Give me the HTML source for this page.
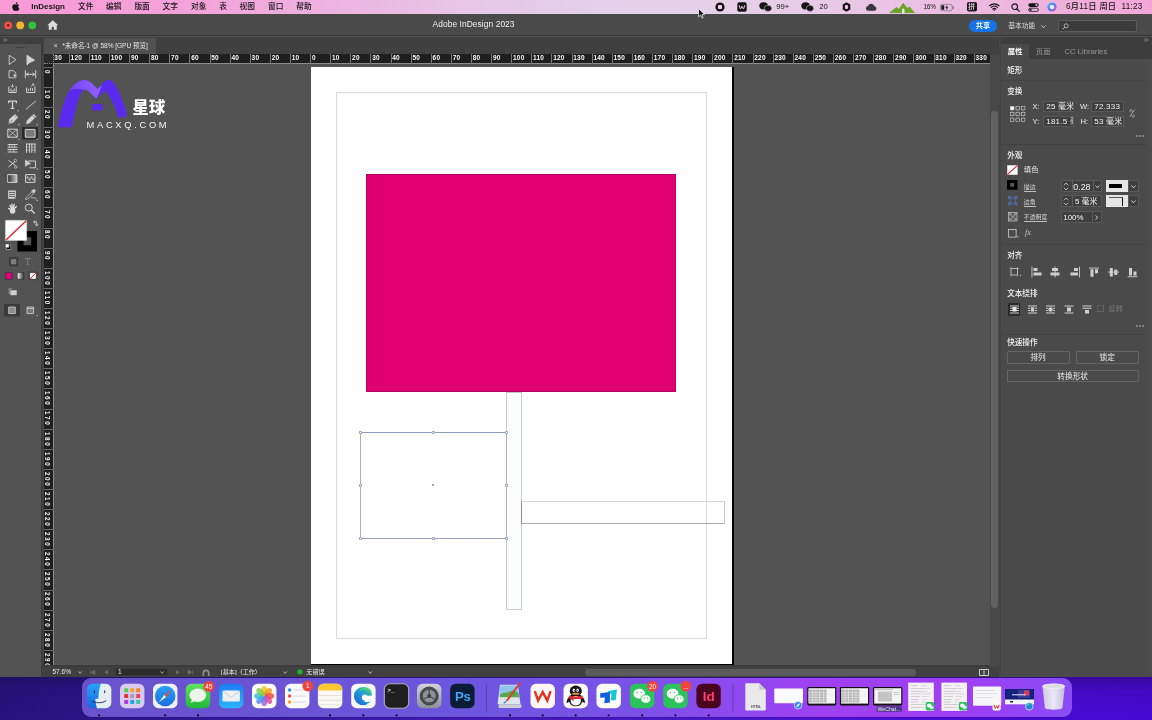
<!DOCTYPE html>
<html lang="zh-CN">
<head>
<meta charset="utf-8">
<title>Adobe InDesign 2023</title>
<style>
*{box-sizing:border-box;margin:0;padding:0}
html,body{width:1152px;height:720px;overflow:hidden}
body{position:relative;font-family:"Liberation Sans","Noto Sans CJK SC",sans-serif;font-size:7.5px;color:#e6e6e6;
 background:linear-gradient(180deg,rgba(20,10,60,.35) 0,rgba(20,10,60,.35) 94%,rgba(20,10,60,.1) 96%,rgba(20,10,60,0) 100%),linear-gradient(90deg,#26137c 0%,#2b1588 8%,#3a1aa8 30%,#4a18c8 60%,#4a0ed8 80%,#4609d2 100%)}
.abs{position:absolute}
svg{position:absolute;overflow:visible}
#menubar{z-index:5;will-change:transform;position:absolute;left:0;top:0;width:1152px;height:14px;
 background:linear-gradient(90deg,#f79ad6 0%,#f4a2da 16%,#eeb2e0 28%,#e7c6e7 40%,#e3d0ea 52%,#e5d1ea 61%,#e8c9e7 73%,#ecbce2 83%,#f0b0dc 92%,#f3a7d9 100%)}
#menubar span{position:absolute;top:0;height:14px;line-height:14.1px;color:#151515;font-size:7.7px;font-weight:500;white-space:nowrap}
#win{position:absolute;left:0;top:0;width:1152px;height:677px;background:#535353;will-change:transform}
#titlebar{position:absolute;left:0;top:14px;width:1152px;height:22px;background:#4a4a4a;border-bottom:1px solid #383838}
#tabstrip{position:absolute;left:0;top:36.5px;width:1152px;height:17.5px;background:#404040}
#doctab{position:absolute;left:44px;top:37.5px;width:112px;height:16.5px;background:#515151}
</style>
</head>
<body>
<div id="menubar">
<svg style="left:11.9px;top:1.8px" width="7.5" height="8.9" viewBox="0 0 16 19"><path fill="#141414" d="M13.2 10c0-2.300 1.900-3.400 2-3.500-1.100-1.600-2.800-1.800-3.400-1.800-1.400-.1-2.800.9-3.500.9s-1.900-.9-3.100-.8c-1.600 0-3.100.9-3.900 2.400-1.700 2.900-.4 7.200 1.200 9.500.800 1.100 1.700 2.400 3 2.400 1.200 0 1.700-.8 3.100-.8s1.900.8 3.100.8c1.300 0 2.100-1.200 2.900-2.300.900-1.300 1.300-2.600 1.300-2.700 0 0-2.500-1-2.500-3.900zM10.800 3.100c.700-.8 1.100-1.900 1-3.100-1 0-2.100.7-2.800 1.500-.6.700-1.200 1.900-1 3 1.100.1 2.200-.6 2.800-1.400z"/></svg>
<span style="left:31.2px;font-weight:bold;font-size:8px">InDesign</span>
<span style="left:78px">文件</span>
<span style="left:106px">编辑</span>
<span style="left:134.4px">版面</span>
<span style="left:162.5px">文字</span>
<span style="left:191px">对象</span>
<span style="left:219.3px">表</span>
<span style="left:239.6px">视图</span>
<span style="left:268px">窗口</span>
<span style="left:296.2px">帮助</span>
<!-- right status icons -->
<svg style="left:714.5px;top:2px" width="10" height="10" viewBox="0 0 10 10"><circle cx="5" cy="5" r="4.6" fill="#161616"/><rect x="3" y="3" width="4" height="4" rx="0.8" fill="#f0d4ea"/></svg>
<svg style="left:737px;top:2px" width="10" height="10" viewBox="0 0 10 10"><rect x="0.3" y="0.3" width="9.400" height="9.400" rx="1.800" fill="#161616"/><path d="M2 3.200 3.500 7 5 4.200 6.500 7 8 3.200" fill="none" stroke="#eed0e8" stroke-width="1"/></svg>
<svg style="left:759px;top:2px" width="13" height="10" viewBox="0 0 13 10"><ellipse cx="4.600" cy="3.800" rx="4.300" ry="3.600" fill="#161616"/><ellipse cx="9" cy="6.300" rx="3.700" ry="3.100" fill="#161616" stroke="#e8c8e4" stroke-width=".5"/></svg>
<span style="left:776.3px;font-size:7.7px">99+</span>
<svg style="left:801px;top:2px" width="13" height="10" viewBox="0 0 13 10"><ellipse cx="4.600" cy="3.800" rx="4.300" ry="3.600" fill="#161616"/><ellipse cx="9" cy="6.300" rx="3.700" ry="3.100" fill="#161616" stroke="#e8c8e4" stroke-width=".5"/></svg>
<span style="left:819.3px;font-size:7.7px">20</span>
<svg style="left:842px;top:2px" width="9" height="10" viewBox="0 0 9 10"><path d="M4.500.3 8.300 2.500v5L4.500 9.700.7 7.500v-5z" fill="#161616"/><ellipse cx="4.500" cy="5" rx="1.700" ry="2.300" fill="#ecc4e2"/></svg>
<svg style="left:865.3px;top:3.800px" width="13.400" height="7" viewBox="0 0 15 9"><path d="M3.200 8.600a3 3 0 0 1-.3-6A4.200 4.200 0 0 1 11 2.900a3 3 0 0 1 .8 5.700z" fill="#3a3440"/></svg>
<svg style="left:888.5px;top:1.500px" width="26" height="11" viewBox="0 0 26 11"><path d="M0 11 7.500 5l2.500 2L14 .8 18.500 6l2-1.500L26 11z" fill="#6aa326"/><path d="M13 11V7.500l1.200-1.300 1.300 1.300V11z" fill="#e9efe0"/></svg>
<span style="left:923.5px;font-size:6.400px;letter-spacing:-.2px">16%</span>
<svg style="left:939.8px;top:3.700px" width="14.400" height="7.200" viewBox="0 0 16 8"><rect x=".4" y=".4" width="13.200" height="7.200" rx="2" fill="none" stroke="#77707a" stroke-width=".8"/><rect x="14.200" y="2.600" width="1.200" height="2.800" rx=".5" fill="#77707a"/><rect x="1.500" y="1.500" width="3.200" height="5" rx="1" fill="#161616"/><path d="M8.300.9 5.800 4.300h1.700L6.700 7.200l2.700-3.600H7.700z" fill="#161616"/></svg>
<svg style="left:966.500px;top:2.300px" width="10" height="9.500" viewBox="0 0 10 9.500"><rect width="10" height="9.500" rx="1.800" fill="#1b1b1b"/></svg>
<span style="left:968px;font-size:7px;color:#f0cfe6;line-height:13.800px">拼</span>
<svg style="left:989.2px;top:3.300px" width="10.600" height="8" viewBox="0 0 12 9"><path d="M.7 3.100a7.600 7.600 0 0 1 10.600 0M2.500 5a5 5 0 0 1 7 0M4.300 6.800a2.500 2.500 0 0 1 3.400 0" fill="none" stroke="#161616" stroke-width="1.300" stroke-linecap="round"/><circle cx="6" cy="8.100" r=".8" fill="#161616"/></svg>
<svg style="left:1010.5px;top:2.500px" width="9" height="9" viewBox="0 0 9 9"><circle cx="3.700" cy="3.700" r="2.800" fill="none" stroke="#161616" stroke-width="1.100"/><path d="M5.800 5.800 8.400 8.400" stroke="#161616" stroke-width="1.200" stroke-linecap="round"/></svg>
<svg style="left:1027.5px;top:2.800px" width="11" height="9" viewBox="0 0 11 9"><rect x=".3" y=".3" width="10.400" height="3.600" rx="1.800" fill="#161616"/><rect x=".6" y="5.200" width="9.800" height="3.200" rx="1.600" fill="none" stroke="#161616" stroke-width=".8"/><circle cx="8.400" cy="2.100" r="1.100" fill="#ecc0e0"/><circle cx="2.600" cy="6.800" r="1.100" fill="#161616"/></svg>
<svg style="left:1046.5px;top:2.200px" width="10" height="10" viewBox="0 0 10 10"><defs><linearGradient id="siri" x1="0" y1="0" x2="1" y2="1"><stop offset="0" stop-color="#3fd0f0"/><stop offset=".5" stop-color="#4a78f0"/><stop offset="1" stop-color="#e055c8"/></linearGradient></defs><circle cx="5" cy="5" r="4.600" fill="url(#siri)"/><circle cx="5" cy="5" r="2.300" fill="#e8ecf8"/></svg>
<span style="left:1066px;font-size:8.200px;letter-spacing:.28px">6月11日 周日&nbsp; 11:23</span>
<svg style="left:697.5px;top:7.500px" width="8" height="11" viewBox="0 0 8 11"><path d="M.6.600v8.200l2-1.800 1.300 3.100 1.300-.5-1.300-3h2.600z" fill="#111" stroke="#fff" stroke-width=".7"/></svg>
</div>
<div id="win">
<div id="titlebar">
<svg style="left:4.300px;top:7.200px" width="34" height="9" viewBox="0 0 34 9"><circle cx="4.200" cy="4.300" r="3.900" fill="#f0544c"/><circle cx="4.200" cy="4.300" r="1.300" fill="#8e0f0a"/><circle cx="16.200" cy="4.300" r="3.900" fill="#f5b52e"/><circle cx="28.300" cy="4.300" r="3.900" fill="#2fc23c"/></svg>
<svg style="left:46.500px;top:6.200px" width="11.500" height="10" viewBox="0 0 23 20"><path d="M11.500.5.500 10.500h3V19.500h6v-6h4v6h6v-9h3z" fill="#dcdcdc"/></svg>
<span class="abs" style="left:432.500px;top:0;height:20px;line-height:20.600px;font-size:8.450px;color:#f0f0f0;white-space:nowrap;letter-spacing:.05px">Adobe InDesign 2023</span>
<div class="abs" style="left:969px;top:6px;width:28px;height:11.500px;border-radius:6px;background:#1473e6;color:#fff;font-weight:bold;font-size:7.200px;line-height:11px;text-align:center">共享</div>
<span class="abs" style="left:1008.200px;top:6px;height:11.500px;line-height:11.500px;font-size:6.800px;color:#dedede;white-space:nowrap">基本功能</span>
<svg style="left:1040.500px;top:10.500px" width="5" height="3.500" viewBox="0 0 5 3.500"><path d="M.5.500 2.500 2.800 4.500.5" fill="none" stroke="#cfcfcf" stroke-width=".9"/></svg>
<div class="abs" style="left:1058px;top:6px;width:79px;height:11.500px;background:#3c3c3c;border:.8px solid #5c5c5c;border-radius:1.500px"></div>
<svg style="left:1061.500px;top:8.500px" width="7" height="7" viewBox="0 0 7 7"><circle cx="4.200" cy="2.800" r="2" fill="none" stroke="#c8c8c8" stroke-width=".8"/><path d="M2.800 4.200.6 6.400" stroke="#c8c8c8" stroke-width=".9"/></svg>
</div>
<div id="tabstrip"></div>
<div id="doctab">
<span class="abs" style="left:9.500px;top:0;line-height:15.500px;font-size:7.500px;color:#d8d8d8">×</span>
<span class="abs" style="left:18.300px;top:0;line-height:16px;font-size:6.600px;color:#e4e4e4;white-space:nowrap;letter-spacing:-.05px">*未命名-1 @ 58% [GPU 预览]</span>
</div>
<div class="abs" style="left:0;top:36.500px;width:42px;height:7.500px;background:#3e3e3e"></div>
<div class="abs" style="left:0;top:44px;width:42px;height:633px;background:#535353;border-right:.8px solid #3a3a3a"></div>
<div class="abs" style="left:42px;top:44px;width:2px;height:633px;background:#424242"></div>
<svg style="left:2.500px;top:38px" width="5" height="4" viewBox="0 0 5 4"><path d="M.4.400 2 2 .4 3.600M2.600.400 4.200 2 2.600 3.600" fill="none" stroke="#bdbdbd" stroke-width=".6"/></svg>
<div class="abs" style="left:15.500px;top:46.800px;width:9px;height:.9px;background:#3a3a3a"></div>
<svg id="tools" style="left:0;top:44px" width="42" height="290" viewBox="0 44 42 290" fill="none" stroke="#d2d2d2" stroke-width=".9" stroke-linejoin="round">
<!-- row1 selection / direct selection -->
<path d="M9.200 55.300v9.200l6.800-4.800z"/>
<path d="M27 55.300v9.600l2.600-2.400 5-2.300z" fill="#d2d2d2"/>
<!-- row2 page tool / gap tool -->
<path d="M9 70.700h4.500l2.300 2.300v4.800H9z"/><path d="M13.500 73.500v4.300l3.600-2.200z" fill="#d2d2d2" stroke="#535353" stroke-width=".4"/>
<path d="M25.300 70.300v8M35.700 70.300v8M26 74.300h9M28.500 72.800 26.500 74.300l2 1.500M32.500 72.800l2 1.500-2 1.500" stroke-width="1"/>
<!-- row3 content collector / placer -->
<path d="M8.800 86.500v6h7.400v-6M10.800 88.500v2.500h3.400v-2.500" stroke-width="1"/><path d="M12.500 84v3M11 85.800l1.500 1.500 1.500-1.500" stroke-width=".8"/>
<path d="M26.500 87.500v5h8.400v-6M28.500 90.800v-2M30.500 90.800v-3M32.500 90.800v-2.500" stroke-width="1"/><path d="M31 86.500 33.800 84M32 84h1.800v1.800" stroke-width=".8"/>
<!-- row4 type / line -->
<path d="M8.600 103.300v-2.100h7.800v2.100M12.500 101.200v7.200M10.700 108.400h3.600" stroke-width="1.300"/>
<path d="M26 109.300 36 100.800" stroke-width=".9"/>
<path d="M18.500 111.200v-1.600l-1.600 1.600z" fill="#d2d2d2" stroke="none"/>
<!-- row5 pen / pencil -->
<path d="M8.800 123.600l.8-4.600 4.200-3.600 3 3.200-3.700 4z" fill="#d2d2d2" stroke-width=".5"/><path d="M8.800 123.600 12.300 120" stroke="#535353" stroke-width=".6"/><path d="M14.500 114.500l3.200 3.400" stroke-width="1.400"/>
<path d="M26.300 123.800l.8-3.300 6.500-6.300 2.400 2.400-6.400 6.400z" fill="#d2d2d2" stroke-width=".5"/><path d="M32.300 115.300l2.500 2.500" stroke="#535353" stroke-width=".7"/>
<path d="M19.500 125.200v-1.600l-1.600 1.600zM37.500 125.200v-1.600l-1.600 1.600z" fill="#d2d2d2" stroke="none"/>
<!-- row6 rect frame / rect (selected) -->
<rect x="22" y="127" width="16" height="12.500" fill="#2b2b2b" stroke="none"/>
<rect x="7.800" y="129.200" width="9.400" height="8" stroke-width="1"/><path d="M7.800 129.200 17.200 137.200M17.200 129.200 7.800 137.200" stroke-width=".7"/>
<rect x="25.300" y="129.400" width="9.800" height="7.800" fill="#7a7a7a" stroke-width="1"/>
<path d="M19.500 140v-1.600l-1.600 1.600zM37.800 139.800v-1.600l-1.600 1.600z" fill="#d2d2d2" stroke="none"/>
<!-- row7 grids -->
<path d="M7.600 144.500h9.800M7.600 147.200h9.800M7.600 149.500h9.800M7.600 152h9.800" stroke-width="1"/><path d="M9.500 144.500v2.700M12 144.500v2.700M14.500 144.500v2.700M10 149.500v2.500M13.500 149.500v2.500" stroke-width=".6"/>
<path d="M26.500 143.800v9M29.600 143.800v9M31.800 143.800v9M35 143.800v9M26 144h9.500" stroke-width="1"/><path d="M26.500 147h3M26.500 150h3M31.800 147h3M31.800 150h3" stroke-width=".6"/>
<!-- row8 scissors / free transform -->
<path d="M8.500 160.500l7 5M8.500 167l6.500-5.500" stroke-width="1"/><circle cx="15.300" cy="160.600" r="1.300" stroke-width=".7"/><circle cx="15.800" cy="167" r="1.300" stroke-width=".7"/>
<path d="M28 161h7.500v6.800h-6" stroke-width="1"/><path d="M25.300 159.800v7l1.800-1.700 3.700-1.400z" fill="#d2d2d2" stroke-width=".4"/>
<path d="M37.800 169.600v-1.600l-1.600 1.600z" fill="#d2d2d2" stroke="none"/>
<!-- row9 gradient / gradient feather -->
<defs><linearGradient id="tg" x1="0" x2="1"><stop offset="0" stop-color="#2a2a2a"/><stop offset="1" stop-color="#c8c8c8"/></linearGradient></defs>
<rect x="7.700" y="174.600" width="9.200" height="7.800" fill="url(#tg)" stroke-width="1"/>
<rect x="25.600" y="174.600" width="9.400" height="7.800" stroke-width="1"/><path d="M26.500 176.500h2v2h-2zM30.500 176.500h2v2h-2zM28.500 178.500h2v2h-2zM32.500 178.500h2v2h-2z" fill="#bdbdbd" stroke="none"/>
<!-- row10 note / eyedropper -->
<path d="M8.200 190.600h7.600v8.200h-7.600z" fill="#dcdcdc" stroke="none"/><path d="M9 192.400h6M9 194.400h6M9 196.400h6" stroke="#4a4a4a" stroke-width=".9"/><path d="M13.600 197.400h2.200v1.400z" fill="#535353" stroke="none"/>
<path d="M25.500 199.500l1-2.500 5.500-5.300 1.600 1.600-5.400 5.400z" stroke-width=".7"/><path d="M31.500 190.800l2.800-1.600 1.300 1.300-1.600 2.800z" fill="#d2d2d2" stroke-width=".5"/><path d="M31 197.800h4.500M36.700 198.300 35.500 199.500" stroke-width=".8"/>
<path d="M37.800 201v-1.600l-1.600 1.600z" fill="#d2d2d2" stroke="none"/>
<!-- row11 hand / zoom -->
<path d="M12.600 210.500 10 205.600M12.600 210.500 11.900 204.200M12.600 210.500 14.200 204.500M12.600 210.500 16.300 206.600M12.600 210.800 8.600 208.400" stroke="#dcdcdc" stroke-width="1.400" stroke-linecap="round"/><ellipse cx="12.600" cy="211" rx="2.700" ry="2.700" fill="#dcdcdc" stroke="none"/>
<circle cx="28.800" cy="207.600" r="3.500" stroke-width="1"/><path d="M31.400 210.200 34.700 213.500" stroke-width="1.500"/>
<!-- fill/stroke -->
<rect x="17.400" y="231" width="19.600" height="20.500" fill="#000" stroke="none"/>
<rect x="23.600" y="237.300" width="7.600" height="8" fill="#535353" stroke="none"/>
<rect x="5.400" y="220.300" width="21.300" height="20.200" fill="#fff" stroke="#d8d8d8" stroke-width=".4"/>
<path d="M6 240 26.300 220.800" stroke="#d8202c" stroke-width="1.300"/>
<path d="M33.800 222h3v3.800M35.300 220.500 33.500 222l1.800 1.500M35.300 224.300l1.500 1.800 1.500-1.800" stroke-width=".9"/>
<rect x="6.600" y="245.300" width="4.200" height="4.200" fill="#000" stroke="#e0e0e0" stroke-width=".5"/><rect x="5.400" y="244" width="3.600" height="3.600" fill="#fff" stroke="#333" stroke-width=".4"/>
<!-- format affects -->
<rect x="9" y="257.200" width="9.200" height="9" fill="#3a3a3a" stroke="none"/>
<rect x="11.300" y="259.500" width="4.600" height="4.500" fill="#7c7c7c" stroke="#9a9a9a" stroke-width=".5"/>
<path d="M25.300 259.500v-1h4.800v1M27.700 258.500v5.700M26.600 264.300h2.200" stroke="#8a8a8a" stroke-width=".8"/>
<!-- apply color row -->
<rect x="5.600" y="272.600" width="6.600" height="6.600" fill="#e6007e" stroke="#2a2a2a" stroke-width=".6"/>
<defs><linearGradient id="tg2" x1="0" x2="1"><stop offset="0" stop-color="#fff"/><stop offset="1" stop-color="#333"/></linearGradient></defs>
<rect x="17.300" y="272.600" width="6.600" height="6.600" fill="url(#tg2)" stroke="#2a2a2a" stroke-width=".6"/>
<rect x="28.400" y="271.600" width="9" height="8.600" fill="#3a3a3a" stroke="none"/>
<rect x="29.700" y="272.600" width="6.600" height="6.600" fill="#fff" stroke="#2a2a2a" stroke-width=".6"/><path d="M30 279 36 272.900" stroke="#d8202c" stroke-width="1"/>
<!-- view options -->
<path d="M10.500 290.500h6v4.500h-6z" fill="#cfcfcf" stroke-width=".4"/><path d="M8.500 289h3M8.500 291h1.500M8.500 293h1.500" stroke-width=".7"/>
<!-- screen mode -->
<rect x="4" y="304" width="16" height="12.500" fill="#3a3a3a" stroke="none"/>
<rect x="8.700" y="307" width="6.600" height="6.600" fill="#8a8a8a" stroke="#cfcfcf" stroke-width=".8"/>
<rect x="27" y="307" width="6.600" height="6.600" fill="#777" stroke="#cfcfcf" stroke-width=".8"/><path d="M27 308.500h6.600" stroke-width=".8"/>
<path d="M37.500 316.300v-1.600l-1.600 1.600z" fill="#d2d2d2" stroke="none"/>
</svg>
<style>
#hruler i{position:absolute;top:0;width:.6px;height:9.6px;background:#787878}
#hruler b{position:absolute;top:0;line-height:8.8px;font-size:6.5px;font-weight:bold;color:#fafafa;white-space:nowrap;letter-spacing:.2px}
#vruler i{position:absolute;left:0;height:.6px;width:9.6px;background:#6c6c6c}
#vruler b{position:absolute;left:-.6px;width:7.4px;font-size:6.3px;font-weight:bold;color:#fafafa;white-space:nowrap;writing-mode:vertical-rl;text-orientation:sideways;line-height:7.4px;letter-spacing:1.6px}
.fr{position:absolute;border:.8px solid #b9bec6}
.hd{position:absolute;width:3.4px;height:3.4px;background:#fff;border:1px solid #a9b1c8}
</style>
<div id="hruler" class="abs" style="left:44px;top:54px;width:946px;height:9.6px;background:#1f1f1f;overflow:hidden">
<div class="abs" style="left:0;top:8.8px;width:946px;height:.8px;background:#8c8c8c"></div>
<i style="left:4.7px"></i><b style="left:6.5px">130</b>
<i style="left:24.8px"></i><b style="left:26.6px">120</b>
<i style="left:44.9px"></i><b style="left:46.7px">110</b>
<i style="left:65.0px"></i><b style="left:66.8px">100</b>
<i style="left:85.1px"></i><b style="left:86.9px">90</b>
<i style="left:105.2px"></i><b style="left:107.0px">80</b>
<i style="left:125.3px"></i><b style="left:127.1px">70</b>
<i style="left:145.4px"></i><b style="left:147.2px">60</b>
<i style="left:165.5px"></i><b style="left:167.3px">50</b>
<i style="left:185.7px"></i><b style="left:187.5px">40</b>
<i style="left:205.8px"></i><b style="left:207.6px">30</b>
<i style="left:225.9px"></i><b style="left:227.7px">20</b>
<i style="left:246.0px"></i><b style="left:247.8px">10</b>
<i style="left:266.1px"></i><b style="left:267.9px">0</b>
<i style="left:286.2px"></i><b style="left:288.0px">10</b>
<i style="left:306.3px"></i><b style="left:308.1px">20</b>
<i style="left:326.4px"></i><b style="left:328.2px">30</b>
<i style="left:346.5px"></i><b style="left:348.3px">40</b>
<i style="left:366.6px"></i><b style="left:368.4px">50</b>
<i style="left:386.8px"></i><b style="left:388.6px">60</b>
<i style="left:406.9px"></i><b style="left:408.7px">70</b>
<i style="left:427.0px"></i><b style="left:428.8px">80</b>
<i style="left:447.1px"></i><b style="left:448.9px">90</b>
<i style="left:467.2px"></i><b style="left:469.0px">100</b>
<i style="left:487.3px"></i><b style="left:489.1px">110</b>
<i style="left:507.4px"></i><b style="left:509.2px">120</b>
<i style="left:527.5px"></i><b style="left:529.3px">130</b>
<i style="left:547.6px"></i><b style="left:549.4px">140</b>
<i style="left:567.8px"></i><b style="left:569.5px">150</b>
<i style="left:587.9px"></i><b style="left:589.7px">160</b>
<i style="left:608.0px"></i><b style="left:609.8px">170</b>
<i style="left:628.1px"></i><b style="left:629.9px">180</b>
<i style="left:648.2px"></i><b style="left:650.0px">190</b>
<i style="left:668.3px"></i><b style="left:670.1px">200</b>
<i style="left:688.4px"></i><b style="left:690.2px">210</b>
<i style="left:708.5px"></i><b style="left:710.3px">220</b>
<i style="left:728.6px"></i><b style="left:730.4px">230</b>
<i style="left:748.7px"></i><b style="left:750.5px">240</b>
<i style="left:768.9px"></i><b style="left:770.7px">250</b>
<i style="left:789.0px"></i><b style="left:790.8px">260</b>
<i style="left:809.1px"></i><b style="left:810.9px">270</b>
<i style="left:829.2px"></i><b style="left:831.0px">280</b>
<i style="left:849.3px"></i><b style="left:851.1px">290</b>
<i style="left:869.4px"></i><b style="left:871.2px">300</b>
<i style="left:889.5px"></i><b style="left:891.3px">310</b>
<i style="left:909.6px"></i><b style="left:911.4px">320</b>
<i style="left:929.7px"></i><b style="left:931.5px">330</b>
</div>
<div id="vruler" class="abs" style="left:44px;top:63.6px;width:9.6px;height:603.4px;background:#1f1f1f;overflow:hidden">
<div class="abs" style="left:8.8px;top:0;width:.8px;height:604px;background:#8c8c8c"></div>
<i style="top:3.1px"></i><b style="top:6.0px">0</b>
<i style="top:23.2px"></i><b style="top:26.1px">10</b>
<i style="top:43.3px"></i><b style="top:46.2px">20</b>
<i style="top:63.4px"></i><b style="top:66.3px">30</b>
<i style="top:83.5px"></i><b style="top:86.4px">40</b>
<i style="top:103.7px"></i><b style="top:106.6px">50</b>
<i style="top:123.8px"></i><b style="top:126.7px">60</b>
<i style="top:143.9px"></i><b style="top:146.8px">70</b>
<i style="top:164.0px"></i><b style="top:166.9px">80</b>
<i style="top:184.1px"></i><b style="top:187.0px">90</b>
<i style="top:204.2px"></i><b style="top:207.1px">100</b>
<i style="top:224.3px"></i><b style="top:227.2px">110</b>
<i style="top:244.4px"></i><b style="top:247.3px">120</b>
<i style="top:264.5px"></i><b style="top:267.4px">130</b>
<i style="top:284.6px"></i><b style="top:287.5px">140</b>
<i style="top:304.8px"></i><b style="top:307.7px">150</b>
<i style="top:324.9px"></i><b style="top:327.8px">160</b>
<i style="top:345.0px"></i><b style="top:347.9px">170</b>
<i style="top:365.1px"></i><b style="top:368.0px">180</b>
<i style="top:385.2px"></i><b style="top:388.1px">190</b>
<i style="top:405.3px"></i><b style="top:408.2px">200</b>
<i style="top:425.4px"></i><b style="top:428.3px">210</b>
<i style="top:445.5px"></i><b style="top:448.4px">220</b>
<i style="top:465.6px"></i><b style="top:468.5px">230</b>
<i style="top:485.7px"></i><b style="top:488.6px">240</b>
<i style="top:505.8px"></i><b style="top:508.8px">250</b>
<i style="top:526.0px"></i><b style="top:528.9px">260</b>
<i style="top:546.1px"></i><b style="top:549.0px">270</b>
<i style="top:566.2px"></i><b style="top:569.1px">280</b>
<i style="top:586.3px"></i><b style="top:589.2px">290</b>
</div>
<div class="abs" style="left:44px;top:54px;width:9.6px;height:9.6px;background:#2b2b2b;border-right:.7px dotted #8a8a8a;border-bottom:.7px dotted #8a8a8a"></div>
<!-- page -->
<div class="abs" style="left:311px;top:67px;width:423px;height:598px;background:#000"></div>
<div class="abs" style="left:311px;top:67px;width:421.2px;height:597px;background:#fff"></div>
<div class="abs" style="left:335.8px;top:92.2px;width:371px;height:546.8px;border:.7px solid #dcd8e0"></div>
<div class="abs" style="left:366px;top:174px;width:310px;height:218px;background:#e10071;border:.6px solid #b0065e"></div>
<!-- frames -->
<div class="fr" style="left:506.1px;top:392px;width:15.8px;height:217.8px;border-color:#c3cbd0;background:#fcfefe"></div>
<div class="fr" style="left:521.2px;top:500.6px;width:204.2px;height:23.2px;border-color:#d8d8d8 #c8c8c8 #a8a8a8 #8a8c92"></div>
<div class="fr" style="left:360.2px;top:432.2px;width:146.6px;height:106.4px;border-color:#8f9bbb #a9b0bd #98a2bb #b0b0b4"></div>
<div class="hd" style="left:359px;top:430.8px"></div><div class="hd" style="left:431.8px;top:430.8px"></div><div class="hd" style="left:504.8px;top:430.8px"></div>
<div class="hd" style="left:359px;top:483.6px"></div><div class="hd" style="left:504.8px;top:483.6px"></div>
<div class="hd" style="left:359px;top:536.6px"></div><div class="hd" style="left:431.8px;top:536.6px"></div><div class="hd" style="left:504.8px;top:536.6px"></div>
<div class="abs" style="left:432.4px;top:484.4px;width:1.8px;height:1.8px;border-radius:1px;background:#6f7fa8"></div>
<!-- scrollbars -->
<div class="abs" style="left:990px;top:54px;width:9px;height:613px;background:#484848"></div>
<div class="abs" style="left:991px;top:111px;width:7px;height:497px;border-radius:3.5px;background:#626262"></div>
<div class="abs" style="left:998.5px;top:36.5px;width:2px;height:641px;background:#454545"></div>
<!-- status bar -->
<div id="status" class="abs" style="left:44px;top:667px;width:955px;height:10px;background:#404040"></div>
<div class="abs" style="left:44px;top:664.8px;width:946px;height:2.2px;background:#3c3c3c"></div>
<div class="abs" style="left:311px;top:664px;width:423px;height:1px;background:#000"></div>
<svg style="left:50px;top:70px" width="130" height="70" viewBox="50 70 130 70">
<defs><linearGradient id="lg1" x1="0" y1="0" x2="1" y2="0"><stop offset="0" stop-color="#7446f6"/><stop offset="1" stop-color="#9462ff"/></linearGradient>
<filter id="lb" x="-5%" y="-5%" width="110%" height="110%"><feGaussianBlur stdDeviation=".45"/></filter></defs>
<g filter="url(#lb)">
<path d="M57.800 127.300C60 115 63 105 66 97c3-7 9-14.500 15.500-16.800 3.500-.7 7.500.8 10 2.800l6 6c1.500-1 6.500-8.500 10.700-9.200 3.800-.3 7.300 4.200 9.800 10.200 3.500 7 7 17 8.800 24 .2 2.500-1.800 3.500-4.800 3.500l-3.800-.2c-2.200-7.300-4.700-13.300-7.200-17.800-2-4-4-7.500-5.500-8.800-2.500 1.300-5.500 5.800-9 7.500-3-1.200-5.500-4.700-8-6.900-2-1.300-4-1.800-5.300-1.300-2.700 3-4.700 9-6.700 16-2 7-3.500 14-4.500 21.300z" fill="#5a2cee"/>
<path d="M69.500 90.500C73 85 77.500 81.500 81.500 80.200c3.500-.7 7.500.8 10 2.800l6 6c1.300-.9 3-2.600 4.600-4.300-1.600 4-3.100 9.500-5.600 13.500-3-1.200-5.500-4.700-8-6.900-2-1.300-4-1.800-5.300-1.300-4-1.700-9.200-1.500-13.700.5z" fill="url(#lg1)"/>
<rect x="92" y="104.100" width="10.600" height="6.500" rx=".8" fill="#5a2cee"/>
</g>
<text x="132.600" y="113.200" font-family="'Liberation Sans','Noto Sans CJK SC',sans-serif" font-weight="900" font-size="16.300" fill="#fff">星球</text>
<text x="86.600" y="128.100" font-family="'Liberation Sans',sans-serif" font-size="9.300" fill="#f4f4f4" letter-spacing="3.300" textLength="83.300">MACXQ.COM</text>
</svg>
<style>
#panel{position:absolute;left:1000.5px;top:36.5px;width:151.5px;height:640.5px;background:#4a4a4a}
#panel .t{position:absolute;white-space:nowrap;color:#ececec;font-size:7.4px;line-height:10px;height:10px}
#panel .u{position:absolute;white-space:nowrap;color:#d4d4d4;font-size:5.9px;line-height:9px;height:9px;border-bottom:.6px solid #bdbdbd}
#panel .f{position:absolute;background:#3f3f3f;border:.7px solid #595959;color:#f2f2f2;font-size:8px;line-height:9.6px;letter-spacing:.25px;white-space:nowrap;overflow:hidden;padding-left:2.2px}
#panel .sep{position:absolute;left:0;width:146px;height:1px;background:#424242}
#panel .btn{position:absolute;border:.7px solid #646464;border-radius:1px;color:#eee;font-size:7.7px;line-height:11px;text-align:center;height:12.400px}
</style>
<div id="panel">
<div class="abs" style="left:0;top:0;width:151.500px;height:7.500px;background:#3d3d3d"></div>
<div class="abs" style="left:0;top:7.500px;width:151.500px;height:15px;background:#3d3d3d"></div>
<div class="abs" style="left:0;top:7.500px;width:28.500px;height:15px;background:#4a4a4a"></div>
<div class="abs" style="left:146px;top:22.500px;width:5.500px;height:618px;background:#4c4c4c"></div>
<svg style="left:143.300px;top:1.600px" width="5" height="4" viewBox="0 0 5 4"><path d="M.4.400 2 2 .4 3.600M2.600.400 4.200 2 2.600 3.600" fill="none" stroke="#bdbdbd" stroke-width=".6"/></svg>
<span class="t" style="left:7.300px;top:10.300px;font-weight:bold;color:#fff">属性</span>
<span class="t" style="left:35.300px;top:10.300px;color:#979797">页面</span>
<span class="t" style="left:64px;top:10.300px;color:#979797;font-size:7.700px">CC Libraries</span>
<span class="t" style="left:6.700px;top:29px;font-weight:500;color:#f4f4f4;font-size:7.600px">矩形</span>
<div class="sep" style="top:43px;background:#444"></div>
<span class="t" style="left:6.700px;top:50px;font-weight:500;color:#f4f4f4;font-size:7.600px">变换</span>
<!-- ref point -->
<svg style="left:9.500px;top:69.500px" width="16" height="17" viewBox="0 0 16 17" fill="none" stroke="#cfcfcf" stroke-width=".6"><rect x=".5" y=".5" width="3.400" height="3.400" fill="#fff"/><rect x="6" y=".5" width="3.400" height="3.400"/><rect x="11.500" y=".5" width="3.400" height="3.400"/><rect x=".5" y="6.300" width="3.400" height="3.400"/><rect x="6" y="6.300" width="3.400" height="3.400"/><rect x="11.500" y="6.300" width="3.400" height="3.400"/><rect x=".5" y="12.100" width="3.400" height="3.400"/><rect x="6" y="12.100" width="3.400" height="3.400"/><rect x="11.500" y="12.100" width="3.400" height="3.400"/><path d="M3.900 2.200H6M9.400 2.200h2.100M3.900 8H6M9.400 8h2.100M3.900 13.800H6M9.400 13.800h2.100M2.200 3.900v2.400M2.200 9.700v2.400M7.700 3.900v2.400M7.700 9.700v2.400M13.200 3.900v2.400M13.200 9.700v2.400" stroke-dasharray=".6 .6"/></svg>
<span class="t" style="left:32px;top:65px;font-size:7.600px">X:</span>
<div class="f" style="left:42.500px;top:64.500px;width:31px;height:10.600px">25 毫米</div>
<span class="t" style="left:79.500px;top:65px;font-size:7.600px">W:</span>
<div class="f" style="left:90.500px;top:64.500px;width:32.500px;height:10.600px">72.333</div>
<span class="t" style="left:32px;top:80px;font-size:7.600px">Y:</span>
<div class="f" style="left:42.500px;top:79.500px;width:31px;height:10.600px">181.5 毫米</div>
<span class="t" style="left:80px;top:80px;font-size:7.600px">H:</span>
<div class="f" style="left:90.500px;top:79.500px;width:32.500px;height:10.600px">53 毫米</div>
<svg style="left:128.800px;top:72.500px" width="6.400" height="8.800" viewBox="0 0 8 11" fill="none" stroke="#b4b4b4" stroke-width="1"><path d="M2 4.200 1.300 2.500a1.300 1.300 0 0 1 2.400-1l.9 2.100M5.700 6.800l.8 1.800a1.300 1.300 0 0 1-2.400 1l-.8-2M.8 9.800 7 1"/></svg>
<svg style="left:135.500px;top:98.500px" width="8" height="2" viewBox="0 0 8 2"><circle cx="1" cy="1" r=".8" fill="#c8c8c8"/><circle cx="4" cy="1" r=".8" fill="#c8c8c8"/><circle cx="7" cy="1" r=".8" fill="#c8c8c8"/></svg>
<div class="sep" style="top:107.500px"></div>
<!-- appearance -->
<span class="t" style="left:6.700px;top:114.300px;font-weight:500;color:#f4f4f4;font-size:7.600px">外观</span>
<svg style="left:6.500px;top:128.300px" width="11" height="10" viewBox="0 0 11 10"><rect x=".3" y=".3" width="10.200" height="9.400" fill="#fff" stroke="#ddd" stroke-width=".3"/><path d="M.6 9.400 10.200.6" stroke="#d9202c" stroke-width="1.100"/></svg>
<span class="t" style="left:23.300px;top:128.800px">填色</span>
<svg style="left:6.500px;top:143.800px" width="11" height="10" viewBox="0 0 11 10"><rect width="10.500" height="9.700" fill="#000"/><rect x="3.300" y="3" width="3.900" height="3.700" fill="#5a5a5a"/></svg>
<span class="u" style="left:23.300px;top:146px">描边</span>
<div class="f" style="left:60px;top:143.200px;width:41.500px;height:12.200px;padding:0"></div>
<svg style="left:62.500px;top:145px" width="6" height="9" viewBox="0 0 6 9" fill="none" stroke="#d0d0d0" stroke-width=".8"><path d="M.8 3.300 3 1l2.200 2.300M.8 5.700 3 8l2.200-2.300"/></svg>
<div class="abs" style="left:71.500px;top:143.900px;width:.7px;height:10.800px;background:#5f5f5f"></div>
<div class="abs" style="left:92px;top:143.900px;width:.7px;height:10.800px;background:#5f5f5f"></div>
<span class="t" style="left:72.800px;top:145.100px;font-size:8.800px;color:#f4f4f4">0.28</span>
<svg style="left:94px;top:148px" width="5" height="3.500" viewBox="0 0 5 3.500"><path d="M.5.500 2.500 2.800 4.500.5" fill="none" stroke="#d8d8d8" stroke-width=".9"/></svg>
<div class="abs" style="left:105.500px;top:143.500px;width:21.500px;height:11.500px;background:#e6e6e6"></div>
<div class="abs" style="left:108.300px;top:147.300px;width:13.400px;height:4.600px;background:#000"></div>
<div class="abs" style="left:127.500px;top:143.200px;width:10.500px;height:12.200px;background:#3f3f3f;border:.7px solid #595959"></div>
<svg style="left:130.300px;top:148px" width="5" height="3.500" viewBox="0 0 5 3.500"><path d="M.5.500 2.500 2.800 4.500.5" fill="none" stroke="#d8d8d8" stroke-width=".9"/></svg>
<!-- corner -->
<svg style="left:7.300px;top:159.500px" width="9.400" height="9.400" viewBox="0 0 11 11" fill="none" stroke="#5577c8" stroke-width=".9"><path d="M2.500 2.500h6v6h-6z"/><rect x=".6" y=".6" width="2.400" height="2.400" fill="#4a4a4a"/><rect x="8" y=".6" width="2.400" height="2.400" fill="#4a4a4a"/><rect x=".6" y="8" width="2.400" height="2.400" fill="#4a4a4a"/><rect x="8" y="8" width="2.400" height="2.400" fill="#4a4a4a"/></svg>
<span class="u" style="left:23.300px;top:161px">边角</span>
<div class="f" style="left:60px;top:158.200px;width:41.500px;height:12.200px;padding:0"></div>
<svg style="left:62.500px;top:160px" width="6" height="9" viewBox="0 0 6 9" fill="none" stroke="#d0d0d0" stroke-width=".8"><path d="M.8 3.300 3 1l2.200 2.300M.8 5.700 3 8l2.200-2.300"/></svg>
<div class="abs" style="left:71.500px;top:158.900px;width:.7px;height:10.800px;background:#5f5f5f"></div>
<span class="t" style="left:74.500px;top:160px;font-size:7.900px;color:#f4f4f4">5 毫米</span>
<div class="abs" style="left:105.500px;top:158.500px;width:21.500px;height:11.500px;background:#e6e6e6"></div>
<div class="abs" style="left:108px;top:160.600px;width:14px;height:9.400px;border-top:.8px solid #555;border-right:1.200px solid #111"></div>
<div class="abs" style="left:127.500px;top:158.200px;width:10.500px;height:12.200px;background:#3f3f3f;border:.7px solid #595959"></div>
<svg style="left:130.300px;top:163px" width="5" height="3.500" viewBox="0 0 5 3.500"><path d="M.5.500 2.500 2.800 4.500.5" fill="none" stroke="#d8d8d8" stroke-width=".9"/></svg>
<!-- opacity -->
<svg style="left:7px;top:175.300px" width="10" height="10" viewBox="0 0 10 10"><rect x=".4" y=".4" width="8.600" height="8.600" fill="#5a5a5a" stroke="#c8c8c8" stroke-width=".7"/><path d="M1 1h2.600v2.600H1zM6 1h2.600v2.600H6zM3.500 3.500h2.600v2.600H3.500zM1 6h2.600v2.600H1zM6 6h2.600v2.600H6z" fill="#8e8e8e"/></svg>
<span class="u" style="left:23.300px;top:176.800px">不透明度</span>
<div class="f" style="left:60px;top:174.600px;width:41.500px;height:12.200px;padding:0"></div>
<div class="abs" style="left:91px;top:175.300px;width:.7px;height:10.800px;background:#5a5a5a"></div>
<span class="t" style="left:62.800px;top:176.600px;font-size:7.900px;color:#f4f4f4">100%</span>
<svg style="left:94.800px;top:178.100px" width="3.500" height="5" viewBox="0 0 3.500 5"><path d="M.5.500 2.800 2.500.5 4.500" fill="none" stroke="#d8d8d8" stroke-width=".9"/></svg>
<!-- fx row -->
<svg style="left:7px;top:192.300px" width="11" height="9" viewBox="0 0 11 9"><rect x=".5" y=".5" width="7.600" height="7.600" fill="none" stroke="#cfcfcf" stroke-width=".8"/><rect x="9.300" y="7.200" width="1" height="1" fill="#cfcfcf"/></svg>
<span class="t" style="left:24.500px;top:191.300px;font-style:italic;font-size:8px;color:#c8c8c8;font-family:'Liberation Serif',serif">fx<span style="font-size:5px">.</span></span>
<div class="sep" style="top:207.500px"></div>
<!-- align -->
<span class="t" style="left:6.700px;top:214.400px;font-weight:500;color:#f4f4f4;font-size:7.600px">对齐</span>
<svg style="left:8px;top:229px" width="132" height="12" viewBox="0 0 132 12" fill="#cfcfcf" stroke="none">
<rect x="2" y="2.500" width="6.500" height="6.500" fill="none" stroke="#cfcfcf" stroke-width=".8"/><path d="M.5 2.500h1M.5 9h1M2 .8v1M8.500 .8v1M9 2.500h1M2 9.500v1M8.500 9.500v1" stroke="#cfcfcf" stroke-width=".6"/><rect x="11" y="9" width="1" height="1"/>
<rect x="22.500" y=".5" width=".9" height="11"/><rect x="24.500" y="2" width="4" height="3"/><rect x="24.500" y="6.500" width="8" height="3"/>
<rect x="45.600" y=".5" width=".9" height="11"/><rect x="43" y="2" width="6" height="3"/><rect x="41.500" y="6.500" width="9" height="3"/>
<rect x="70" y=".5" width=".9" height="11"/><rect x="65" y="2" width="4" height="3"/><rect x="61.500" y="6.500" width="7.500" height="3"/>
<rect x="80" y="1.600" width="10" height=".9"/><rect x="81.500" y="3.300" width="3" height="7.500"/><rect x="86" y="3.300" width="3" height="4"/>
<rect x="99" y="5.600" width="11" height=".9"/><rect x="100.800" y="2" width="3" height="8.500"/><rect x="105.300" y="3.500" width="3" height="5.500"/>
<rect x="118.500" y="10.300" width="10" height=".9"/><rect x="120" y="2" width="3" height="7.500"/><rect x="124.500" y="5.500" width="3" height="4"/>
</svg>
<!-- text wrap -->
<span class="t" style="left:6.700px;top:252px;font-weight:500;color:#f4f4f4;font-size:7.600px">文本绕排</span>
<div class="abs" style="left:7px;top:266.500px;width:12.500px;height:12.500px;background:#2c2c2c"></div>
<svg style="left:8px;top:267.500px" width="90" height="11" viewBox="0 0 90 11" fill="#cfcfcf" stroke="none">
<path d="M1 1.500h9v1H1zM1 3.800h9v1H1zM1 6.100h9v1H1zM1 8.400h9v1H1z"/><rect x="3.500" y="3" width="4" height="4.500" fill="#e8e8e8"/>
<path d="M19 1.500h9v1h-9zM19 3.800h2.300v1H19zM25.700 3.800H28v1h-2.300zM19 6.100h2.300v1H19zM25.700 6.100H28v1h-2.300zM19 8.400h9v1h-9z"/><rect x="22" y="3.300" width="3" height="4.300"/>
<path d="M37 1.500h9v1h-9zM37 3.800h1.800v1H37zM44.200 3.800H46v1h-1.800zM37 6.100h1.800v1H37zM44.200 6.100H46v1h-1.800zM37 8.400h9v1h-9z"/><circle cx="41.500" cy="5.500" r="2.200"/>
<path d="M55.500 1.500h9v1h-9zM55.500 8.400h9v1h-9z"/><rect x="58" y="3.500" width="4" height="4"/>
<path d="M73.500 1.500h9v1h-9zM73.500 3.800h9v1h-9z"/><rect x="76" y="6" width="4" height="3.500"/>
</svg>
<div class="abs" style="left:96.500px;top:268.500px;width:6.500px;height:6.500px;border:.7px solid #626262"></div>
<span class="t" style="left:108px;top:267px;color:#7c7c7c;font-size:7.300px">反转</span>
<svg style="left:135.500px;top:288.500px" width="8" height="2" viewBox="0 0 8 2"><circle cx="1" cy="1" r=".8" fill="#c8c8c8"/><circle cx="4" cy="1" r=".8" fill="#c8c8c8"/><circle cx="7" cy="1" r=".8" fill="#c8c8c8"/></svg>
<div class="sep" style="top:297px"></div>
<!-- quick actions -->
<span class="t" style="left:6.700px;top:301.200px;font-weight:500;color:#f4f4f4;font-size:7.600px">快速操作</span>
<div class="btn" style="left:6px;top:314.800px;width:63.200px">排列</div>
<div class="btn" style="left:75.300px;top:314.800px;width:63px">锁定</div>
<div class="btn" style="left:6px;top:333.400px;width:132.300px">转换形状</div>
</div>
<!-- status bar content -->
<style>
#sb{position:absolute;left:0;top:667px;width:1000px;height:10px;font-size:6.500px;color:#ececec}
#sb span{position:absolute;top:0;line-height:10px;white-space:nowrap}
</style>
<div id="sb">
<span style="left:52.500px">57.6%</span>
<svg style="left:77.800px;top:3.600px" width="4.400" height="3" viewBox="0 0 5 3.500"><path d="M.5.500 2.500 2.800 4.500.5" fill="none" stroke="#d0d0d0" stroke-width=".9"/></svg>
<svg style="left:90px;top:2.800px" width="5" height="4.500" viewBox="0 0 5 4.500"><path d="M.4 0v4.500M4.800 0 1.300 2.250 4.800 4.500z" fill="#6e6e6e" stroke="#6e6e6e" stroke-width=".7"/></svg>
<svg style="left:104px;top:2.800px" width="4" height="4.500" viewBox="0 0 4 4.500"><path d="M3.800 0 .3 2.250 3.800 4.500z" fill="#6e6e6e"/></svg>
<div class="abs" style="left:114.500px;top:.8px;width:53.500px;height:8.600px;background:#2c2c2c;border:.6px solid #3a3a3a"></div>
<span style="left:118px">1</span>
<svg style="left:160.300px;top:3.600px" width="4.400" height="3" viewBox="0 0 5 3.500"><path d="M.5.500 2.500 2.800 4.500.5" fill="none" stroke="#d0d0d0" stroke-width=".9"/></svg>
<svg style="left:175.500px;top:2.800px" width="4" height="4.500" viewBox="0 0 4 4.500"><path d="M.2 0 3.700 2.250.2 4.500z" fill="#6e6e6e"/></svg>
<svg style="left:187.500px;top:2.800px" width="5" height="4.500" viewBox="0 0 5 4.500"><path d="M4.600 0v4.500M.2 0 3.700 2.250.2 4.500z" fill="#6e6e6e" stroke="#6e6e6e" stroke-width=".7"/></svg>
<svg style="left:202px;top:1.500px" width="8" height="8" viewBox="0 0 8 8"><path d="M1.300 7V4a2.700 2.700 0 0 1 5.400 0v3" fill="none" stroke="#8e8e8e" stroke-width="1.700"/></svg>
<span style="left:221px;font-size:6.100px">[基本]（工作）</span>
<svg style="left:283.200px;top:3.600px" width="4.400" height="3" viewBox="0 0 5 3.500"><path d="M.5.500 2.500 2.800 4.500.5" fill="none" stroke="#d0d0d0" stroke-width=".9"/></svg>
<svg style="left:297.200px;top:2.200px" width="5.800" height="5.800" viewBox="0 0 5 5"><circle cx="2.500" cy="2.500" r="2.300" fill="#22b02e"/></svg>
<span style="left:306.300px;font-size:6.100px">无错误</span>
<svg style="left:368px;top:3.600px" width="4.400" height="3" viewBox="0 0 5 3.500"><path d="M.5.500 2.500 2.800 4.500.5" fill="none" stroke="#d0d0d0" stroke-width=".9"/></svg>
<div class="abs" style="left:585px;top:2px;width:331px;height:6.800px;border-radius:3.400px;background:#5b5b5b"></div>
<svg style="left:978.500px;top:2px" width="10" height="7" viewBox="0 0 10 7"><path d="M.5.500h9v6h-9zM5 .5v6" fill="none" stroke="#dcdcdc" stroke-width=".9"/></svg>
</div>
</div><!-- /win -->
<div class="abs" style="left:81.500px;top:677.800px;width:990px;height:39.600px;border-radius:9px;background:linear-gradient(90deg,#6a52cc 0%,#6a54d4 20%,#6c56de 38%,#7a52e8 55%,#8c4aee 65%,#a040f2 75%,#a03ef2 88%,#8a4cf5 100%);box-shadow:0 0 0 .5px rgba(30,20,90,.6)"></div>
<svg style="left:0;top:676px;will-change:transform" width="1152" height="44" viewBox="0 676 1152 44" font-family="'Liberation Sans','Noto Sans CJK SC',sans-serif">
<defs>
<linearGradient id="dfb" x1="0" y1="0" x2="0" y2="1"><stop offset="0" stop-color="#2aa3f8"/><stop offset="1" stop-color="#1468e0"/></linearGradient>
<linearGradient id="dmail" x1="0" y1="0" x2="0" y2="1"><stop offset="0" stop-color="#1e7cf2"/><stop offset="1" stop-color="#2bb4fa"/></linearGradient>
<linearGradient id="dmsg" x1="0" y1="0" x2="0" y2="1"><stop offset="0" stop-color="#5fe35f"/><stop offset="1" stop-color="#20b83a"/></linearGradient>
<linearGradient id="dsaf" x1="0" y1="0" x2="0" y2="1"><stop offset="0" stop-color="#2aa0f5"/><stop offset="1" stop-color="#1a6fe0"/></linearGradient>
<linearGradient id="dsys" x1="0" y1="0" x2="0" y2="1"><stop offset="0" stop-color="#d2d4da"/><stop offset="1" stop-color="#8c9098"/></linearGradient>
<linearGradient id="dedge" x1="0" y1="1" x2="1" y2="0"><stop offset="0" stop-color="#1560c4"/><stop offset=".5" stop-color="#2496dc"/><stop offset="1" stop-color="#42d07c"/></linearGradient>
<linearGradient id="dtrash" x1="0" y1="0" x2="1" y2="0"><stop offset="0" stop-color="#d4d4dc"/><stop offset=".5" stop-color="#f4f4f8"/><stop offset="1" stop-color="#c8c8d2"/></linearGradient>
</defs>
<rect x="86.9" y="683.8" width="24.4" height="24.4" rx="5.5" fill="url(#dfb)" />
<path d="M99.0 683.8h6.800a5.500 5.500 0 0 1 5.500 5.500v13.400a5.500 5.500 0 0 1-5.500 5.500h-8.800c-1-3-1.500-6-1.600-9.500h3c0-5 .8-10 2.400-14.900z" fill="#e6edf5"/>
<path d="M91.7 700.8c3 2.600 11 2.600 14.600-.2" fill="none" stroke="#1a2c44" stroke-width=".9"/>
<rect x="93.9" y="690.3" width="1" height="3" rx=".5" fill="#1a2c44"/><rect x="104.2" y="690.3" width="1" height="3" rx=".5" fill="#1a2c44"/>
<circle cx="99.1" cy="715.4" r="1.150" fill="#121026"/>
<rect x="120.0" y="683.8" width="24.4" height="24.4" rx="5.5" fill="#d9caf2" />
<rect x="124.2" y="688.3" width="4" height="4" rx=".9" fill="#4ccf4a"/>
<rect x="130.2" y="688.3" width="4" height="4" rx=".9" fill="#f5a623"/>
<rect x="136.2" y="688.3" width="4" height="4" rx=".9" fill="#f08a1e"/>
<rect x="124.2" y="694.1" width="4" height="4" rx=".9" fill="#e8302c"/>
<rect x="130.2" y="694.1" width="4" height="4" rx=".9" fill="#a0a4ac"/>
<rect x="136.2" y="694.1" width="4" height="4" rx=".9" fill="#ec3c5c"/>
<rect x="124.2" y="699.9" width="4" height="4" rx=".9" fill="#a040d8"/>
<rect x="130.2" y="699.9" width="4" height="4" rx=".9" fill="#26a0f0"/>
<rect x="136.2" y="699.9" width="4" height="4" rx=".9" fill="#30c8a0"/>
<rect x="153.0" y="683.8" width="24.4" height="24.4" rx="5.5" fill="#f1f2f8" />
<circle cx="165.2" cy="696.0" r="10.300" fill="url(#dsaf)"/>
<path d="M171.5 689.7l-7.300 5.300 2 2z" fill="#f04a3a"/><path d="M171.5 689.7l-7.300 5.300 2 2z" fill="#f6f6f6" transform="rotate(180 165.2 696.0)"/>
<circle cx="165.2" cy="715.4" r="1.150" fill="#121026"/>
<rect x="185.8" y="683.8" width="24.4" height="24.4" rx="5.5" fill="url(#dmsg)" />
<ellipse cx="197.8" cy="695.3" rx="8.300" ry="6.800" fill="#eef6ea"/><path d="M192.3 699.3l-1.800 3.600 4.500-1.800z" fill="#eef6ea"/>
<circle cx="208.8" cy="686.5" r="5.4" fill="#f0443c"/><text x="208.8" y="688.8" font-size="6.400" fill="#fff" text-anchor="middle">45</text>
<circle cx="198.0" cy="715.4" r="1.150" fill="#121026"/>
<rect x="219.0" y="683.8" width="24.4" height="24.4" rx="5.5" fill="url(#dmail)" />
<rect x="222.5" y="690.6" width="17.400" height="11" rx="1.300" fill="#f2f2f4"/><path d="M222.9 691.1l8.300 6.200 8.300-6.200" fill="none" stroke="#b9c2d0" stroke-width=".8"/><path d="M222.9 701.1l5.800-5M239.5 701.1l-5.800-5" stroke="#cfd6e0" stroke-width=".6"/>
<rect x="252.0" y="683.8" width="24.4" height="24.4" rx="5.5" fill="#fbfbfd" />
<ellipse cx="264.20" cy="690.80" rx="4.900" ry="3.100" transform="rotate(-90 264.20 690.80)" fill="#f8c21a" fill-opacity=".82"/>
<ellipse cx="267.88" cy="692.32" rx="4.900" ry="3.100" transform="rotate(-45 267.88 692.32)" fill="#f59a1c" fill-opacity=".82"/>
<ellipse cx="269.40" cy="696.00" rx="4.900" ry="3.100" transform="rotate(0 269.40 696.00)" fill="#ee4a3a" fill-opacity=".82"/>
<ellipse cx="267.88" cy="699.68" rx="4.900" ry="3.100" transform="rotate(45 267.88 699.68)" fill="#e8409a" fill-opacity=".82"/>
<ellipse cx="264.20" cy="701.20" rx="4.900" ry="3.100" transform="rotate(90 264.20 701.20)" fill="#a060d8" fill-opacity=".82"/>
<ellipse cx="260.52" cy="699.68" rx="4.900" ry="3.100" transform="rotate(135 260.52 699.68)" fill="#4a8cf0" fill-opacity=".82"/>
<ellipse cx="259.00" cy="696.00" rx="4.900" ry="3.100" transform="rotate(180 259.00 696.00)" fill="#38b8e8" fill-opacity=".82"/>
<ellipse cx="260.52" cy="692.32" rx="4.900" ry="3.100" transform="rotate(225 260.52 692.32)" fill="#7ccc44" fill-opacity=".82"/>
<rect x="285.0" y="683.8" width="24.4" height="24.4" rx="5.5" fill="#fafafc" />
<circle cx="289.6" cy="690.0" r="1.700" fill="#2a8cf0"/><rect x="293.5" y="689.7" width="12.500" height=".7" fill="#c8c8cc"/>
<circle cx="289.6" cy="696.0" r="1.700" fill="#f04848"/><rect x="293.5" y="695.7" width="12.500" height=".7" fill="#c8c8cc"/>
<circle cx="289.6" cy="702.0" r="1.700" fill="#f5a020"/><rect x="293.5" y="701.7" width="12.500" height=".7" fill="#c8c8cc"/>
<circle cx="307.8" cy="686.0" r="5.4" fill="#f0443c"/><text x="307.8" y="688.3" font-size="6.400" fill="#fff" text-anchor="middle">1</text>
<rect x="317.9" y="683.8" width="24.4" height="24.4" rx="5.5" fill="#faf8f2" />
<path d="M317.9 689.3a5.500 5.500 0 0 1 5.500-5.500h13.400a5.500 5.500 0 0 1 5.500 5.500v1.300h-24.400z" fill="#fbc92e"/>
<rect x="317.9" y="695.3" width="24.400" height=".6" fill="#d8d4c8"/>
<rect x="317.9" y="699.9" width="24.400" height=".6" fill="#d8d4c8"/>
<rect x="317.9" y="704.5" width="24.400" height=".6" fill="#d8d4c8"/>
<circle cx="330.1" cy="715.4" r="1.150" fill="#121026"/>
<rect x="351.2" y="683.8" width="24.4" height="24.4" rx="5.5" fill="#f8f9fd" />
<circle cx="363.0" cy="696.1" r="9.100" fill="url(#dedge)"/>
<path d="M359.2 691.6c1.500-5.800 10.500-6 13.200 1.200-3.800-3.200-9.500-3.500-13.200-1.200z" fill="#48d47e" fill-opacity=".85"/>
<circle cx="364.8" cy="697.4" r="2.900" fill="#f8f9fd"/>
<path d="M364.8 696.0l8.500-.6v3.800l-3.500 2.300c-2 1-4 .8-5.500-.2z" fill="#f8f9fd"/>
<circle cx="363.4" cy="715.4" r="1.150" fill="#121026"/>
<rect x="384.3" y="683.8" width="24.4" height="24.4" rx="5.5" fill="#202022" stroke="#aeaeb8" stroke-width="1.100"/>
<text x="387.5" y="692.3" font-size="5.800" font-family="'Liberation Mono',monospace" font-weight="bold" fill="#f0f0f0">&gt;_</text>
<circle cx="396.5" cy="715.4" r="1.150" fill="#121026"/>
<rect x="417.0" y="683.8" width="24.4" height="24.4" rx="5.5" fill="url(#dsys)" />
<circle cx="429.2" cy="696.0" r="9" fill="#4a4c52" stroke="#2e3034" stroke-width=".8"/><circle cx="429.2" cy="696.0" r="6.300" fill="#8e9299"/><circle cx="429.2" cy="696.0" r="2" fill="#3a3c40"/>
<path d="M429.2 696.0v-6.300M429.2 696.0l5.400 3.200M429.2 696.0l-5.400 3.200" stroke="#3a3c40" stroke-width="1"/>
<rect x="450.2" y="683.8" width="24.4" height="24.4" rx="5.5" fill="#0b1d36" />
<text x="462.8" y="701.1" font-size="13.200" font-weight="bold" fill="#3fa6f8" text-anchor="middle" letter-spacing="-.3">Ps</text>
<rect x="486" y="684.500" width=".7" height="27" fill="#3a2a8a" fill-opacity=".7"/>
<path d="M500.0 684.8h18l2.400 19.500h-22.800z" fill="#dfe6ea"/>
<path d="M500.5 685.6h17l1.300 11h-19.600z" fill="#8ec4ee"/><path d="M518.3 692.8l1.300 4.500h-19.600l.3-3c3-2 6-1 8-2.500 3-1.500 7-1 10 1z" fill="#5aa84a"/>
<rect x="498.6" y="704.3" width="22.800" height="3.800" rx=".8" fill="#c9ced4"/>
<path d="M521.0 683.3l-13 17.500-2 .8.500-2.200 13.200-17.300z" fill="#d8402c"/><path d="M507.5 700.0l-2.800 3.800-1.600-1.300z" fill="#3a78d8"/>
<circle cx="510.0" cy="715.4" r="1.150" fill="#121026"/>
<rect x="530.5" y="683.8" width="24.4" height="24.4" rx="5.5" fill="#fdf8f8" />
<path d="M534.8 691.1l3.300 9.500 4.600-8.500 4.600 8.500 3.300-9.500" fill="none" stroke="#e2341e" stroke-width="2.400" stroke-linejoin="miter"/>
<circle cx="542.7" cy="715.4" r="1.150" fill="#121026"/>
<rect x="563.5" y="683.8" width="24.4" height="24.4" rx="5.5" fill="#fbfbfe" />
<ellipse cx="575.75" cy="705.300" rx="6.200" ry="1.300" fill="#f0e4b8"/>
<path d="M569.300 697c-2 1.500-3 4-2.600 6.300l2.600-1.800zM582.200 697c2 1.500 3 4 2.600 6.300l-2.600-1.800z" fill="#141418"/>
<ellipse cx="575.75" cy="699.800" rx="7" ry="6.500" fill="#141418"/>
<ellipse cx="575.75" cy="691" rx="6.100" ry="5.400" fill="#141418"/>
<ellipse cx="575.75" cy="700.800" rx="5.200" ry="4.800" fill="#f8f8fa"/>
<path d="M569 695.600c3.500 1.500 10 1.500 13.500 0l.5 2.300c-3.500 1.600-11 1.600-14.500 0z" fill="#e8282a"/><path d="M571.300 697.500h2.300v3.300l-2.300-.8z" fill="#e8282a"/>
<ellipse cx="573.900" cy="690.300" rx="1.300" ry="1.700" fill="#fff"/><ellipse cx="577.600" cy="690.300" rx="1.300" ry="1.700" fill="#fff"/><circle cx="574.300" cy="690.500" r=".6" fill="#111"/><circle cx="577.200" cy="690.500" r=".6" fill="#111"/>
<ellipse cx="575.75" cy="693.700" rx="3.800" ry="1" fill="#e8962a"/>
<circle cx="575.7" cy="715.4" r="1.150" fill="#121026"/>
<rect x="596.5" y="683.8" width="24.4" height="24.4" rx="5.5" fill="#fbfbfe" />
<path d="M607.600 691.300 617 689.600 615.600 700.300 610.800 700.300 611.600 694.500z" fill="#12c6d6"/>
<path d="M600.200 693.200 609.900 692 609.900 702.500 604.300 703.300 605 697.400 600.200 697.800z" fill="#0a5ee0"/>
<circle cx="608.7" cy="715.4" r="1.150" fill="#121026"/>
<rect x="630.0" y="683.8" width="24.4" height="24.4" rx="5.5" fill="#2cc25c" />
<ellipse cx="639.3" cy="693.8" rx="5.900" ry="5" fill="#f4faf4"/><ellipse cx="645.8" cy="699.0" rx="5" ry="4.300" fill="#f4faf4" stroke="#2cc25c" stroke-width=".8"/>
<circle cx="637.3" cy="692.6" r=".7" fill="#2cc25c"/><circle cx="641.3" cy="692.6" r=".7" fill="#2cc25c"/><circle cx="644.2" cy="698.1" r=".6" fill="#2cc25c"/><circle cx="647.4" cy="698.1" r=".6" fill="#2cc25c"/>
<circle cx="652.6" cy="686.2" r="5.4" fill="#f0443c"/><text x="652.6" y="688.5" font-size="6.400" fill="#fff" text-anchor="middle">20</text>
<circle cx="642.2" cy="715.4" r="1.150" fill="#121026"/>
<rect x="663.3" y="683.8" width="24.4" height="24.4" rx="5.5" fill="#2cc25c" />
<ellipse cx="672.6" cy="693.8" rx="5.900" ry="5" fill="#f4faf4"/><ellipse cx="679.1" cy="699.0" rx="5" ry="4.300" fill="#f4faf4" stroke="#2cc25c" stroke-width=".8"/>
<circle cx="670.6" cy="692.6" r=".7" fill="#2cc25c"/><circle cx="674.6" cy="692.6" r=".7" fill="#2cc25c"/><circle cx="677.5" cy="698.1" r=".6" fill="#2cc25c"/><circle cx="680.7" cy="698.1" r=".6" fill="#2cc25c"/>
<circle cx="685.9" cy="686.2" r="5.4" fill="#f0443c"/><text x="685.9" y="688.5" font-size="6.400" fill="#fff" text-anchor="middle">...</text>
<circle cx="675.5" cy="715.4" r="1.150" fill="#121026"/>
<rect x="696.4" y="683.8" width="24.4" height="24.4" rx="5.5" fill="#4a0420" />
<text x="708.7" y="700.8" font-size="13.500" font-weight="bold" fill="#ff3f6e" text-anchor="middle">Id</text>
<circle cx="708.6" cy="715.4" r="1.150" fill="#121026"/>
<rect x="732.500" y="684.500" width=".7" height="27" fill="#4a2a9a" fill-opacity=".7"/>
<path d="M746.3 683.300h13l6.500 6.500v19.700a1 1 0 0 1-1 1h-18.500a1 1 0 0 1-1-1v-25.200a1 1 0 0 1 1-1z" fill="#e9e9ec"/><path d="M759.3 683.300v5.500a1 1 0 0 0 1 1h5.500z" fill="#c6c6cc"/>
<text x="756.0" y="707.600" font-size="3.600" font-weight="bold" fill="#555" text-anchor="middle">HTML</text>
<rect x="774.300" y="688.600" width="28.700" height="14.600" rx=".8" fill="#fbfbfd"/>
<circle cx="798" cy="705.300" r="3.800" fill="#2a8cf0" stroke="#e8eef8" stroke-width=".7"/><path d="M800 703.300l-2.800 1.400-1.200 2.600 2.800-1.400z" fill="#fff"/>
<rect x="807.3" y="687.0" width="29.0" height="18.4" rx="1.300" fill="#111"/><rect x="808.5" y="688.2" width="26.6" height="15.4" fill="#f4f4f4"/><rect x="808.5" y="689.5" width="18.1" height="12.9" fill="#b8b8b8"/><rect x="812.1" y="689.5" width=".5" height="12.9" fill="#eee"/><rect x="815.7" y="689.5" width=".5" height="12.9" fill="#eee"/><rect x="819.4" y="689.5" width=".5" height="12.9" fill="#eee"/><rect x="823.0" y="689.5" width=".5" height="12.9" fill="#eee"/><rect x="808.5" y="692.1" width="18.1" height=".5" fill="#eee"/><rect x="808.5" y="694.7" width="18.1" height=".5" fill="#eee"/><rect x="808.5" y="697.2" width="18.1" height=".5" fill="#eee"/><rect x="808.5" y="699.8" width="18.1" height=".5" fill="#eee"/>
<rect x="839.9" y="687.0" width="29.3" height="18.4" rx="1.300" fill="#111"/><rect x="841.1" y="688.2" width="26.9" height="15.4" fill="#f4f4f4"/><rect x="841.1" y="689.5" width="18.3" height="12.9" fill="#b8b8b8"/><rect x="844.8" y="689.5" width=".5" height="12.9" fill="#eee"/><rect x="848.4" y="689.5" width=".5" height="12.9" fill="#eee"/><rect x="852.1" y="689.5" width=".5" height="12.9" fill="#eee"/><rect x="855.7" y="689.5" width=".5" height="12.9" fill="#eee"/><rect x="841.1" y="692.1" width="18.3" height=".5" fill="#eee"/><rect x="841.1" y="694.7" width="18.3" height=".5" fill="#eee"/><rect x="841.1" y="697.2" width="18.3" height=".5" fill="#eee"/><rect x="841.1" y="699.8" width="18.3" height=".5" fill="#eee"/>
<rect x="830.500" y="706.500" width="5" height="3.500" rx=".8" fill="#8a5ad0"/><rect x="863" y="706.500" width="5" height="3.500" rx=".8" fill="#8a5ad0"/>
<rect x="873" y="687" width="29.400" height="18.400" rx="1.300" fill="#111"/><rect x="874.200" y="688.200" width="27" height="15.400" fill="#f4f4f4"/><rect x="878" y="691.500" width="14" height="10" fill="#c4c4c4"/><rect x="875" y="689.500" width="18" height=".6" fill="#999"/><rect x="893.500" y="692" width="6" height=".6" fill="#aaa"/><rect x="893.500" y="694" width="6" height=".6" fill="#aaa"/>
<rect x="876.500" y="706.200" width="25.500" height="5.600" rx="1.200" fill="#3c3470" fill-opacity=".85"/><text x="877.500" y="710.800" font-size="5.200" fill="#f2f2f2">WeChat...</text>
<rect x="908.2" y="682.600" width="25.600" height="28.300" fill="#f3f1f3"/>
<rect x="910.7" y="685.5" width="7.0" height=".6" fill="#b8b4bc"/>
<rect x="921.7" y="685.5" width="5.0" height=".6" fill="#cfc4cc"/>
<rect x="910.7" y="688.2" width="12.0" height=".6" fill="#b8b4bc"/>
<rect x="921.7" y="688.2" width="8.0" height=".6" fill="#cfc4cc"/>
<rect x="910.7" y="690.9" width="11.0" height=".6" fill="#b8b4bc"/>
<rect x="921.7" y="690.9" width="6.0" height=".6" fill="#cfc4cc"/>
<rect x="910.7" y="693.6" width="10.0" height=".6" fill="#b8b4bc"/>
<rect x="921.7" y="693.6" width="9.0" height=".6" fill="#cfc4cc"/>
<rect x="910.7" y="696.3" width="9.0" height=".6" fill="#b8b4bc"/>
<rect x="921.7" y="696.3" width="7.0" height=".6" fill="#cfc4cc"/>
<rect x="910.7" y="699.0" width="8.0" height=".6" fill="#b8b4bc"/>
<rect x="921.7" y="699.0" width="5.0" height=".6" fill="#cfc4cc"/>
<rect x="910.7" y="701.7" width="7.0" height=".6" fill="#b8b4bc"/>
<rect x="921.7" y="701.7" width="8.0" height=".6" fill="#cfc4cc"/>
<rect x="910.7" y="704.4" width="12.0" height=".6" fill="#b8b4bc"/>
<rect x="921.7" y="704.4" width="6.0" height=".6" fill="#cfc4cc"/>
<rect x="910.7" y="707.1" width="11.0" height=".6" fill="#b8b4bc"/>
<rect x="921.7" y="707.1" width="9.0" height=".6" fill="#cfc4cc"/>
<rect x="925.7" y="702" width="8.600" height="8.600" rx="2" fill="#2cc25c"/><ellipse cx="929.2" cy="705.500" rx="2.300" ry="1.900" fill="#f4faf4"/><ellipse cx="931.5" cy="707.300" rx="1.900" ry="1.600" fill="#f4faf4"/>
<rect x="941.4" y="682.600" width="25.600" height="28.300" fill="#f3f1f3"/>
<rect x="943.9" y="685.5" width="7.0" height=".6" fill="#b8b4bc"/>
<rect x="954.9" y="685.5" width="5.0" height=".6" fill="#cfc4cc"/>
<rect x="943.9" y="688.2" width="12.0" height=".6" fill="#b8b4bc"/>
<rect x="954.9" y="688.2" width="8.0" height=".6" fill="#cfc4cc"/>
<rect x="943.9" y="690.9" width="11.0" height=".6" fill="#b8b4bc"/>
<rect x="954.9" y="690.9" width="6.0" height=".6" fill="#cfc4cc"/>
<rect x="943.9" y="693.6" width="10.0" height=".6" fill="#b8b4bc"/>
<rect x="954.9" y="693.6" width="9.0" height=".6" fill="#cfc4cc"/>
<rect x="943.9" y="696.3" width="9.0" height=".6" fill="#b8b4bc"/>
<rect x="954.9" y="696.3" width="7.0" height=".6" fill="#cfc4cc"/>
<rect x="943.9" y="699.0" width="8.0" height=".6" fill="#b8b4bc"/>
<rect x="954.9" y="699.0" width="5.0" height=".6" fill="#cfc4cc"/>
<rect x="943.9" y="701.7" width="7.0" height=".6" fill="#b8b4bc"/>
<rect x="954.9" y="701.7" width="8.0" height=".6" fill="#cfc4cc"/>
<rect x="943.9" y="704.4" width="12.0" height=".6" fill="#b8b4bc"/>
<rect x="954.9" y="704.4" width="6.0" height=".6" fill="#cfc4cc"/>
<rect x="943.9" y="707.1" width="11.0" height=".6" fill="#b8b4bc"/>
<rect x="954.9" y="707.1" width="9.0" height=".6" fill="#cfc4cc"/>
<rect x="958.9" y="702" width="8.600" height="8.600" rx="2" fill="#2cc25c"/><ellipse cx="962.4" cy="705.500" rx="2.300" ry="1.900" fill="#f4faf4"/><ellipse cx="964.7" cy="707.300" rx="1.900" ry="1.600" fill="#f4faf4"/>
<rect x="973" y="686.500" width="28.200" height="19.300" rx=".8" fill="#f6f5f8"/><rect x="975" y="690" width="20" height=".6" fill="#c8c8d0"/><rect x="975" y="693.500" width="22" height=".6" fill="#d4d4dc"/><rect x="975" y="697" width="18" height=".6" fill="#d4d4dc"/>
<rect x="992.500" y="702.300" width="8.200" height="8.200" rx="1.800" fill="#fbf6f4"/><path d="M994 704.800l1.300 3.600 1.300-2.700 1.300 2.700 1.300-3.600" fill="none" stroke="#e2301e" stroke-width="1"/>
<rect x="1005" y="689" width="29" height="15.300" fill="#f4f4f8"/><rect x="1005" y="689" width="29" height="10.500" fill="#12227a"/><rect x="1018" y="690" width="12" height="8" fill="#3a3a9a"/><rect x="1024" y="690.500" width="5" height="5" fill="#d83a5a"/><rect x="1012" y="694.300" width="14" height="1" fill="#e8e8f4"/><rect x="1010" y="701" width="3" height="1.500" fill="#222"/>
<circle cx="1029.300" cy="706.300" r="3.800" fill="#1b86d8" stroke="#f0f4f8" stroke-width=".7"/><path d="M1026.200 706a3.200 3.200 0 0 1 6.200-.8c-1.500-1.800-4-1.200-4.300.8z" fill="#35c1b1"/>
<path d="M1042.500 686.300c0-3.400 22.300-3.400 22.300 0l-2.300 21.500c-.3 2.500-17.400 2.500-17.700 0z" fill="url(#dtrash)" fill-opacity=".92"/><ellipse cx="1053.650" cy="686.300" rx="11.150" ry="2.400" fill="#dcdce4" stroke="#f8f8fc" stroke-width=".6"/>
</svg>
</body>
</html>
